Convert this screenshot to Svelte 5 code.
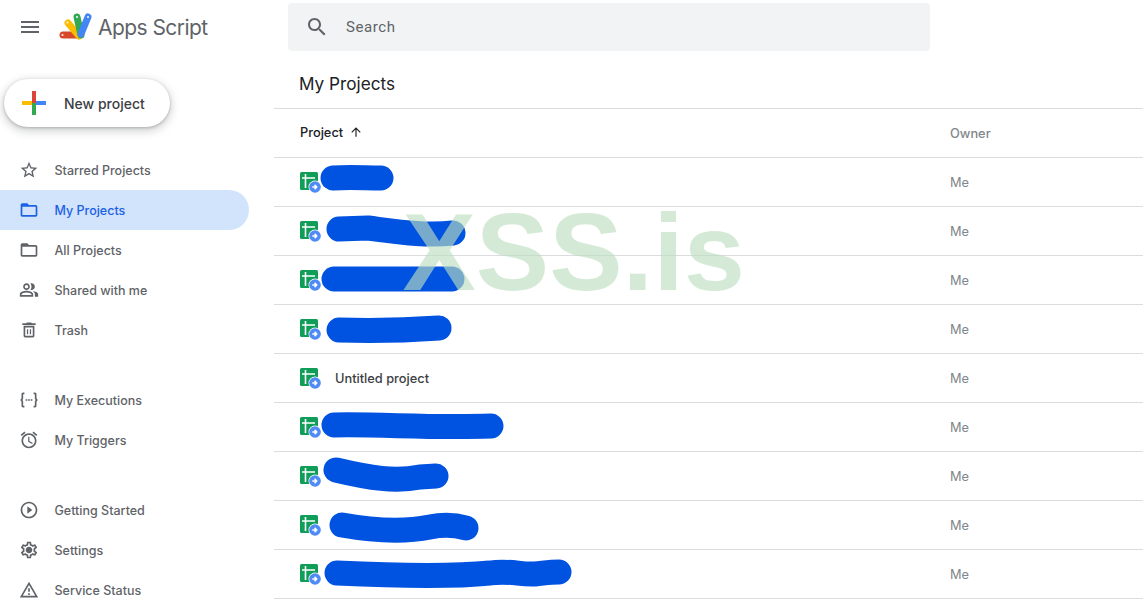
<script>
  const icons = {
    star: "M22 9.24l-7.19-.62L12 2 9.19 8.63 2 9.24l5.46 4.73L5.82 21 12 17.27 18.18 21l-1.63-7.03L22 9.24zM12 15.4l-3.76 2.27 1-4.28-3.32-2.88 4.38-.38L12 6.1l1.71 4.04 4.38.38-3.32 2.88 1 4.28L12 15.4z",
    folder: "M20 6h-8l-2-2H4c-1.1 0-2 .9-2 2v12c0 1.1.9 2 2 2h16c1.1 0 2-.9 2-2V8c0-1.1-.9-2-2-2zm0 12H4V8h16v10z",
    people: "M16.67 13.13C18.04 14.06 19 15.32 19 17v3h4v-3c0-2.18-3.57-3.47-6.33-3.87zM15 12c2.21 0 4-1.79 4-4s-1.79-4-4-4c-.47 0-.91.1-1.33.24C14.5 5.27 15 6.58 15 8s-.5 2.73-1.33 3.76c.42.14.86.24 1.33.24zM9 12c2.21 0 4-1.79 4-4s-1.79-4-4-4-4 1.79-4 4 1.79 4 4 4zm0-6c1.1 0 2 .9 2 2s-.9 2-2 2-2-.9-2-2 .9-2 2-2zM9 13c-2.67 0-8 1.34-8 4v3h16v-3c0-2.66-5.33-4-8-4zm6 5H3v-.99C3.2 16.29 6.3 15 9 15s5.8 1.29 6 2z",
    trash: "M5.5 19c0 1.1.9 2 2 2h9c1.1 0 2-.9 2-2V7h-13v12zM7.5 9h9v10h-9V9zm8-5l-1-1h-5l-1 1H4v2h16V4h-4.5zM9.5 11H11v6H9.5zm3.5 0h1.5v6H13z",
    exec: "M6.5 3H5C3.5 3 3 4 3 5v5l-1.5 2L3 14v5c0 1 .5 2 2 2h1.5v-2H5v-5.8L3.9 12 5 10.8V5h1.5V3zm11 0H19c1.5 0 2 1 2 2v5l1.5 2L21 14v5c0 1-.5 2-2 2h-1.500v-2H19v-5.800l1.100-1.200L19 10.800V5h-1.500V3zM8 11h2v2H8zm3 0h2v2h-2zm3 0h2v2h-2z",
    alarm: "M22 5.72l-4.6-3.86-1.29 1.53 4.6 3.86L22 5.72zM7.88 3.39L6.6 1.86 2 5.71l1.29 1.53 4.59-3.85zM12.5 8H11v6l4.75 2.85.75-1.23-4-2.37V8zM12 4c-4.97 0-9 4.03-9 9s4.03 9 9 9 9-4.03 9-9-4.03-9-9-9zm0 16c-3.87 0-7-3.13-7-7s3.13-7 7-7 7 3.13 7 7-3.13 7-7 7z",
    play: "M10 16.5l6-4.5-6-4.5v9zM12 2C6.48 2 2 6.48 2 12s4.48 10 10 10 10-4.48 10-10S17.52 2 12 2zm0 18c-4.41 0-8-3.59-8-8s3.59-8 8-8 8 3.59 8 8-3.59 8-8 8z",
    gear: "M19.43 12.98c.04-.32.07-.64.07-.98 0-.34-.03-.66-.07-.98l2.11-1.65c.19-.15.24-.42.12-.64l-2-3.46c-.09-.16-.26-.25-.44-.25-.06 0-.12.01-.17.03l-2.49 1c-.52-.4-1.08-.73-1.69-.98l-.38-2.65C14.46 2.18 14.25 2 14 2h-4c-.25 0-.46.18-.49.42l-.38 2.65c-.61.25-1.17.59-1.69.98l-2.49-1c-.06-.02-.12-.03-.18-.03-.17 0-.34.09-.43.25l-2 3.46c-.13.22-.07.49.12.64l2.11 1.65c-.04.32-.07.65-.07.98 0 .33.03.66.07.98l-2.11 1.65c-.19.15-.24.42-.12.64l2 3.46c.09.16.26.25.44.25.06 0 .12-.01.17-.03l2.49-1c.52.4 1.08.73 1.69.98l.38 2.65c.03.24.24.42.49.42h4c.25 0 .46-.18.49-.42l.38-2.65c.61-.25 1.17-.59 1.69-.98l2.49 1c.06.02.12.03.18.03.17 0 .34-.09.43-.25l2-3.46c.12-.22.07-.49-.12-.64l-2.11-1.65zm-1.98-1.71c.04.31.05.52.05.73 0 .21-.02.43-.05.73l-.14 1.13.89.7 1.08.84-.7 1.21-1.27-.51-1.04-.42-.9.68c-.43.32-.84.56-1.25.73l-1.06.43-.16 1.13-.2 1.35h-1.4l-.19-1.35-.16-1.13-1.06-.43c-.43-.18-.83-.41-1.23-.71l-.91-.7-1.06.43-1.27.51-.7-1.21 1.08-.84.89-.7-.14-1.13c-.03-.31-.05-.54-.05-.74s.02-.43.05-.73l.14-1.13-.89-.7-1.08-.84.7-1.21 1.27.51 1.04.42.9-.68c.43-.32.84-.56 1.25-.73l1.06-.43.16-1.13.2-1.35h1.39l.19 1.35.16 1.13 1.06.43c.43.18.83.41 1.23.71l.91.7 1.06-.43 1.27-.51.7 1.21-1.07.85-.89.7.14 1.13zM12 8c-2.21 0-4 1.79-4 4s1.79 4 4 4 4-1.79 4-4-1.79-4-4-4z",
    warn: "M12 5.99L19.53 19H4.47L12 5.99M12 2L1 21h22L12 2zm1 14h-2v2h2v-2zm0-6h-2v4h2v-4z"
  };

  const navGroups = [
    [
      { label: "Starred Projects", icon: "star" },
      { label: "My Projects", icon: "folder", active: true },
      { label: "All Projects", icon: "folder" },
      { label: "Shared with me", icon: "people" },
      { label: "Trash", icon: "trash" }
    ],
    [
      { label: "My Executions", icon: "exec" },
      { label: "My Triggers", icon: "alarm" }
    ],
    [
      { label: "Getting Started", icon: "play" },
      { label: "Settings", icon: "gear" },
      { label: "Service Status", icon: "warn" }
    ]
  ];

  // the blue marks are drawn in page coordinates, the viewBox moves them into each row
  const projects = [
    { mark: "M333,178 C350,177 365,178 381,178" },
    { mark: "M339,229 L368,228 C400,232 425,236 453,233" },
    { mark: "M334,279 C370,279 420,279 452,279" },
    { mark: "M339,330 C370,331 410,330 439,328" },
    { name: "Untitled project" },
    { mark: "M334,425 C380,424 430,428 491,426" },
    { mark: "M336,470 C370,478 395,482 420,477 L436,476" },
    { mark: "M342,525 C370,530 400,533 430,527 C445,524 455,525 466,528" },
    { mark: "M337,573 C400,576 460,576 490,573 C510,570 520,575 535,574 C545,573 550,572 559,572" }
  ];
</script>

<div class="page">
  <aside class="sidebar">
    <div class="brand">
      <svg class="menu" viewBox="0 0 24 24"><path d="M3 18h18v-2H3v2zm0-5h18v-2H3v2zm0-7v2h18V6H3z" /></svg>
      <svg class="logo" viewBox="0 0 34 28">
        <line x1="21" y1="22" x2="4" y2="22" stroke="#d8492b" stroke-width="7" stroke-linecap="round" />
        <line x1="20" y1="23" x2="9" y2="10" stroke="#fbbc04" stroke-width="7" stroke-linecap="round" />
        <line x1="22" y1="22" x2="18" y2="4" stroke="#34a853" stroke-width="7" stroke-linecap="round" />
        <line x1="22" y1="21" x2="29" y2="4" stroke="#4285f4" stroke-width="7" stroke-linecap="round" />
        <circle cx="3.5" cy="22" r="1" fill="#fff" />
        <circle cx="8.5" cy="9.5" r="1" fill="#fff" />
        <circle cx="18" cy="4" r="1" fill="#fff" />
        <circle cx="29" cy="4" r="1" fill="#fff" />
      </svg>
      <span class="brand-name">Apps Script</span>
    </div>

    <button class="new-project">
      <svg class="plus" viewBox="0 0 24 24">
        <rect x="0" y="10" width="12" height="4" fill="#fbbc04" />
        <rect x="12" y="10" width="12" height="4" fill="#4285f4" />
        <rect x="10" y="12" width="4" height="12" fill="#34a853" />
        <rect x="10" y="0" width="4" height="12" fill="#db4437" />
      </svg>
      New project
    </button>

    <nav>
      {#each navGroups as group}
        <ul>
          {#each group as item}
            <li class:active={item.active}>
              <svg class="nav-icon" viewBox="0 0 24 24"><path d={icons[item.icon]} /></svg>
              {item.label}
            </li>
          {/each}
        </ul>
      {/each}
    </nav>
  </aside>

  <main>
    <div class="search">
      <svg viewBox="0 0 24 24"><path d="M15.5 14h-.79l-.28-.27C15.41 12.59 16 11.11 16 9.5 16 5.91 13.09 3 9.5 3S3 5.91 3 9.5 5.91 16 9.5 16c1.61 0 3.09-.59 4.23-1.57l.27.28v.79l5 4.99L20.49 19l-4.99-5zm-6 0C7.01 14 5 11.99 5 9.5S7.01 5 9.5 5 14 7.01 14 9.5 11.99 14 9.5 14z" /></svg>
      <span>Search</span>
    </div>

    <h1>My Projects</h1>

    <div class="row head">
      <div class="sort">
        Project
        <svg viewBox="0 0 24 24"><path d="M4 12l1.41 1.41L11 7.83V20h2V7.83l5.58 5.59L20 12l-8-8-8 8z" /></svg>
      </div>
      <div class="owner">Owner</div>
    </div>

    {#each projects as project, i}
      <div class="row">
        <div class="name">
          <svg class="sheet" viewBox="0 0 20 20">
            <rect x="0" y="0" width="18" height="18" rx="1.5" fill="#0f9d58" />
            <path d="M5.5 2v14M2 6h13" stroke="#fff" stroke-width="1.6" fill="none" />
            <circle cx="15" cy="15" r="6.5" fill="#fff" />
            <circle cx="15" cy="15" r="5.8" fill="#4f8af5" />
            <path d="M12.3 15h3.4M14.6 12.9l2.1 2.1-2.1 2.1" stroke="#fff" stroke-width="1.5" fill="none" />
          </svg>
          {#if project.name}<span>{project.name}</span>{/if}
        </div>
        <div class="owner">Me</div>
        {#if project.mark}
          <svg class="mark" viewBox="274 {158 + 49 * i} 869 48"><path d={project.mark} /></svg>
        {/if}
      </div>
    {/each}

    <div class="watermark">XSS.is</div>
  </main>
</div>

<style>
  :global(body) {
    margin: 0;
    background: #fff;
  }

  .page {
    display: flex;
    height: 605px;
    overflow: hidden;
    font-family: Inter, Roboto, "Liberation Sans", sans-serif;
  }

  .sidebar {
    width: 274px;
    flex: none;
  }

  .brand {
    display: flex;
    align-items: center;
    height: 54px;
    padding-left: 18px;
  }

  .menu {
    width: 24px;
    height: 24px;
    fill: #5f6368;
  }

  .logo {
    width: 34px;
    height: 28px;
    margin-left: 17px;
  }

  .brand-name {
    margin-left: 5px;
    font-size: 21px;
    letter-spacing: -0.55px;
    color: #5f6368;
  }

  .new-project {
    display: flex;
    align-items: center;
    gap: 18px;
    width: 166px;
    height: 48px;
    margin: 25px 0 23px 4px;
    padding: 0 0 0 18px;
    border: none;
    border-radius: 24px;
    background: #fff;
    box-shadow: 0 1px 3px rgba(60, 64, 67, 0.3), 0 3px 8px 2px rgba(60, 64, 67, 0.2);
    font-family: inherit;
    font-size: 14px;
    font-weight: 500;
    color: #3c4043;
  }

  .plus {
    width: 24px;
    height: 24px;
  }

  ul {
    margin: 0 0 30px;
    padding: 0;
    list-style: none;
  }

  li {
    display: flex;
    align-items: center;
    gap: 15.5px;
    width: 230px;
    height: 40px;
    padding-left: 19px;
    border-radius: 0 20px 20px 0;
    font-size: 12.5px;
    font-weight: 500;
    color: #5f6368;
  }

  li.active {
    background: #d2e3fc;
    color: #1a62e2;
  }

  .nav-icon {
    width: 20px;
    height: 20px;
    fill: #5f6368;
  }

  li.active .nav-icon {
    fill: #1a62e2;
  }

  main {
    position: relative;
    flex: 1;
  }

  .search {
    display: flex;
    align-items: center;
    gap: 17px;
    width: 642px;
    height: 48px;
    margin: 3px 0 0 14px;
    padding-left: 17px;
    box-sizing: border-box;
    border-radius: 4px;
    background: #f1f3f4;
    font-family: Roboto, sans-serif;
    font-size: 15px;
    letter-spacing: 0.6px;
    color: #5f6368;
  }

  .search svg {
    width: 24px;
    height: 24px;
    fill: #5f6368;
  }

  h1 {
    margin: 0;
    height: 58px;
    box-sizing: border-box;
    padding: 21px 0 0 25px;
    border-bottom: 1px solid #dadce0;
    font-size: 17.2px;
    line-height: 24px;
    font-weight: 400;
    color: #202124;
  }

  .row {
    position: relative;
    display: grid;
    grid-template-columns: 650px 1fr;
    align-items: center;
    height: 49px;
    box-sizing: border-box;
    padding-left: 26px;
    border-bottom: 1px solid #dadce0;
    font-size: 12.8px;
  }

  .sort {
    display: flex;
    align-items: center;
    gap: 6px;
    padding-bottom: 2px;
    font-weight: 500;
    color: #202124;
  }

  .sort svg {
    width: 14px;
    height: 14px;
    fill: #202124;
  }

  .owner {
    font-size: 12.8px;
    font-weight: 500;
    color: #80868b;
  }

  .row:not(.head) .owner {
    font-weight: 400;
  }

  .name {
    display: flex;
    align-items: center;
    gap: 14px;
    font-weight: 500;
    color: #3c4043;
  }

  .sheet {
    width: 20px;
    height: 20px;
    overflow: visible;
    margin-right: 1px;
  }

  .mark {
    position: absolute;
    inset: 0;
    width: 100%;
    height: 48px;
    overflow: visible;
  }

  .mark path {
    fill: none;
    stroke: #0052e0;
    stroke-width: 25;
    stroke-linecap: round;
    stroke-linejoin: round;
  }

  .watermark {
    position: absolute;
    left: 128.5px;
    top: 197px;
    font-family: "Liberation Sans", Arial, sans-serif;
    font-size: 110px;
    line-height: 1;
    font-weight: 700;
    color: rgba(188, 222, 191, 0.64);
    pointer-events: none;
  }
</style>
